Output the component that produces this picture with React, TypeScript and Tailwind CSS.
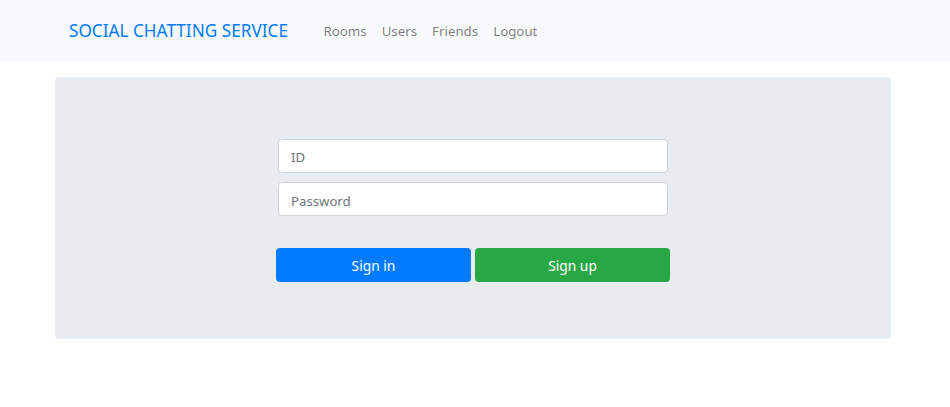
import * as React from "react";

const font = { fontFamily: '"Noto Sans", "Open Sans", sans-serif' };

export default function App() {
  const links = ["Rooms", "Users", "Friends", "Logout"];

  return (
    <div className="min-h-[407px] bg-white" style={font}>
      <nav className="flex h-[62px] items-center bg-[#f8f9fa] pl-[69px]">
        <a className="text-[17.2px] leading-none text-[#007bff]" href="#">
          SOCIAL CHATTING SERVICE
        </a>
        <ul className="ml-[28px] flex items-center pt-[1px]">
          {links.map((l) => (
            <li key={l}>
              <a className="block px-[7.5px] text-[13.3px] text-[rgba(0,0,0,0.5)]" href="#">
                {l}
              </a>
            </li>
          ))}
        </ul>
      </nav>

      <div className="ml-[55px] mt-[15px] flex h-[262px] w-[836px] flex-col items-center rounded-[4px] bg-[#e9ecef] pt-[62px]">
        <form className="flex w-[394px] flex-col items-center" onSubmit={(e) => e.preventDefault()}>
          <input
            className="h-[34px] w-[390px] rounded-[4px] border border-[#ced4da] bg-white px-[12px] pt-[1px] text-[13.2px] text-[#495057] outline-none placeholder:text-[#6c757d]"
            placeholder="ID"
          />
          <input
            type="password"
            className="mt-[9px] h-[34px] w-[390px] rounded-[4px] border border-[#ced4da] bg-white px-[12px] pt-[3px] text-[13.2px] text-[#495057] outline-none placeholder:text-[#6c757d]"
            placeholder="Password"
          />
          <div className="mt-[32px] flex w-[394px] gap-[4px]">
            <button className="h-[34px] flex-1 rounded-[4px] bg-[#007bff] pt-[2px] text-[13.8px] text-white">
              Sign in
            </button>
            <button className="h-[34px] flex-1 rounded-[4px] bg-[#28a745] pt-[2px] text-[13.8px] text-white">
              Sign up
            </button>
          </div>
        </form>
      </div>
    </div>
  );
}
